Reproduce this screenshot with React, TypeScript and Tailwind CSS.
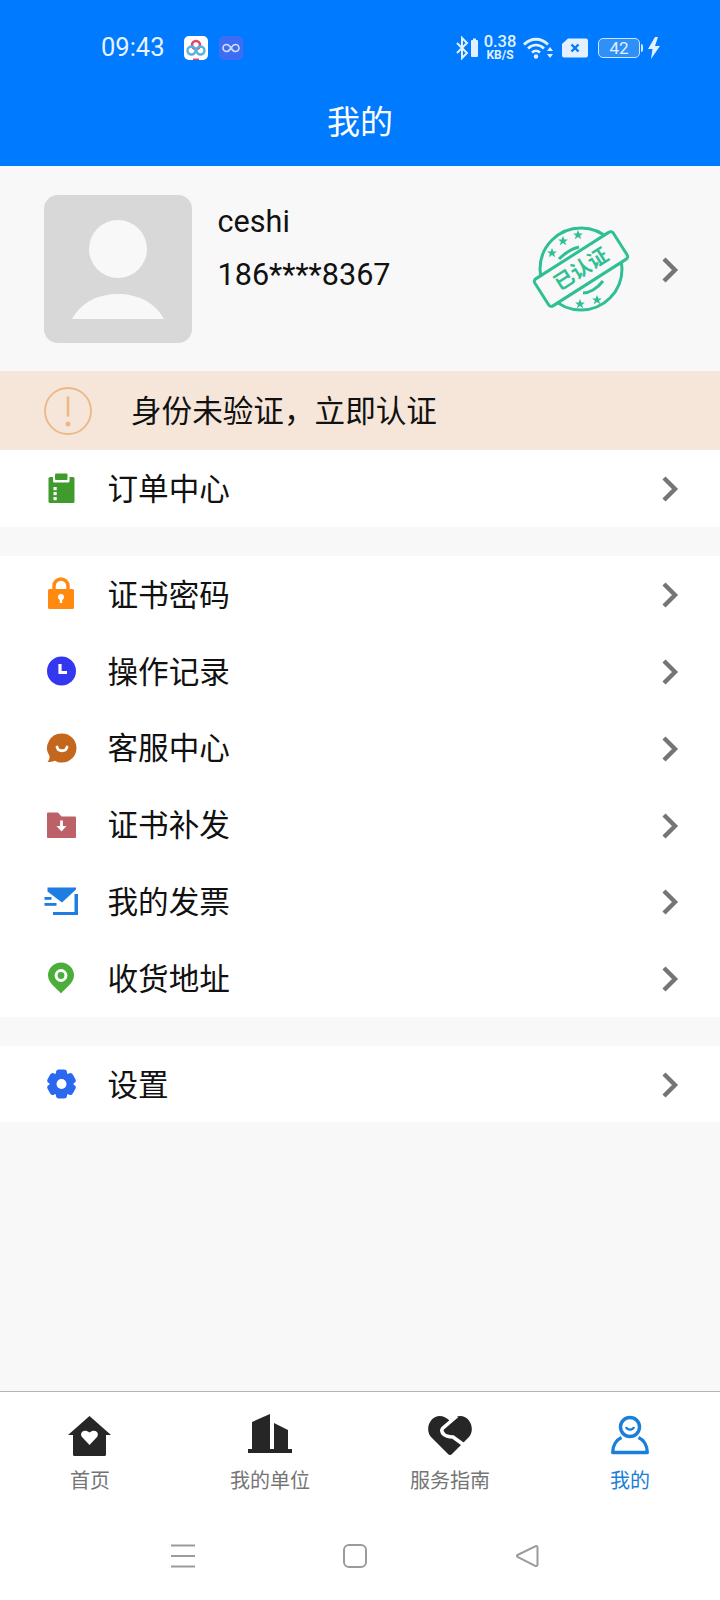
import React from "react";

const Chevron = () => (
  <svg width="18" height="28" viewBox="0 0 18 28" className="shrink-0 translate-y-[1px]">
    <path d="M3 3 L14 14 L3 25" fill="none" stroke="#757575" strokeWidth="4.4" />
  </svg>
);

const icons: Record<string, React.ReactNode> = {
  order: (
    <>
      <rect x="4.500" y="7" width="26" height="26" rx="1.500" fill="#3f9b2c" />
      <path d="M9 6h16.500v5a1.500 1.500 0 0 1-1.500 1.500H10.500A1.500 1.500 0 0 1 9 11z" fill="#fff" />
      <rect x="11" y="3.500" width="12.500" height="6.500" rx="1" fill="#3f9b2c" />
      <rect x="9.500" y="17" width="3.200" height="3.200" fill="#fff" />
      <rect x="9.500" y="22" width="3.200" height="3.200" fill="#fff" />
      <rect x="9.500" y="27" width="3.200" height="3.200" fill="#fff" />
    </>
  ),
  lock: (
    <>
      <path d="M10 15v-5a7 7 0 0 1 14 0v5" fill="none" stroke="#ff8a0f" strokeWidth="3.400" />
      <rect x="4" y="13" width="26" height="20" rx="1.500" fill="#ff8a0f" />
      <circle cx="17" cy="21" r="3" fill="#fff" />
      <rect x="15.800" y="22" width="2.400" height="5" fill="#fff" />
    </>
  ),
  clock: (
    <>
      <circle cx="17.500" cy="18" r="14.500" fill="#3437f0" />
      <path d="M16 11v8.500h7" fill="none" stroke="#fff" strokeWidth="3.200" />
    </>
  ),
  chat: (
    <>
      <path d="M18 3.500c8 0 14.500 6.300 14.500 14.500S26 32.500 18 32.500c-3 0-5-.5-7-1.800-2 .8-5 1.300-7.500 1.300 1.500-1.700 2.200-3.600 2-6A14.500 14.500 0 0 1 18 3.500z" fill="#c4661c" />
      <path d="M13 17c1 5 9 5 10 0" fill="none" stroke="#fff" strokeWidth="2.800" strokeLinecap="round" />
    </>
  ),
  folder: (
    <>
      <path d="M3 6.500a1 1 0 0 1 1-1h10l3.500 4H31a1 1 0 0 1 1 1V30a1 1 0 0 1-1 1H4a1 1 0 0 1-1-1z" fill="#bd6168" />
      <path d="M17.500 13.500v7" stroke="#fff" strokeWidth="2.800" />
      <path d="M12.500 19h10l-5 5.500z" fill="#fff" />
    </>
  ),
  mail: (
    <>
      <path d="M3.500 4.500h28.500v2L18 19.500 3.500 8.500z" fill="#1d7de0" />
      <path d="M30.500 11H34v21H9v-3h21.500z" fill="#1d7de0" />
      <rect x="0.500" y="14" width="7" height="2.800" fill="#1d7de0" />
      <rect x="0.500" y="20" width="12" height="2.800" fill="#1d7de0" />
    </>
  ),
  pin: (
    <>
      <path d="M17 33.500 C13 28.500 4 23 4 15.500 A13 13 0 0 1 30 15.500 C30 23 21 28.500 17 33.500z" fill="#4cae3a" />
      <circle cx="17" cy="15.500" r="6.400" fill="#fff" />
      <circle cx="17" cy="15.500" r="3.400" fill="#4cae3a" />
    </>
  ),
  gear: (
    <>
      <circle cx="17.500" cy="18" r="12" fill="#2b68f0" />
      <rect x="12" y="3.500" width="11" height="29" rx="3" fill="#2b68f0" />
      <rect x="12" y="3.500" width="11" height="29" rx="3" fill="#2b68f0" transform="rotate(60 17.500 18)" />
      <rect x="12" y="3.500" width="11" height="29" rx="3" fill="#2b68f0" transform="rotate(120 17.500 18)" />
      <circle cx="17.500" cy="18" r="5" fill="#fff" />
    </>
  ),
};

const Row = ({ icon, label }: { icon: string; label: string }) => (
  <div className="flex h-[76.8px] items-center bg-white pl-[44px] pr-[41px]">
    <svg width="34" height="36" viewBox="0 0 34 36" className="shrink-0 overflow-visible">
      {icons[icon]}
    </svg>
    <span className="ml-[29.500px] flex-1 pt-[4px] text-[30.600px] leading-none text-[#111]">{label}</span>
    <Chevron />
  </div>
);

const Tab = ({ label, active, children }: { label: string; active?: boolean; children: React.ReactNode }) => (
  <div className="flex flex-col items-center">
    <svg width="48" height="48" viewBox="0 0 48 48">
      {children}
    </svg>
    <span className={`mt-[7px] text-[20px] leading-[28px] ${active ? "text-[#1a7fd8]" : "text-[#757575]"}`}>{label}</span>
  </div>
);

const Star = ({ x, y }: { x: number; y: number }) => (
  <path
    transform={`translate(${x} ${y}) scale(1.400)`}
    d="M0-3.600 1-1.100 3.500-1.100 1.500.5 2.300 3 0 1.500-2.300 3-1.500.5-3.500-1.100-1-1.100z"
    fill="#2fbf95"
  />
);

export default function App() {
  return (
    <div className="flex min-h-[1600px] w-[720px] flex-col bg-[#f8f8f8] font-['Roboto','Noto_Sans_CJK_SC',sans-serif]">
      <header className="h-[166px] bg-[#007aff] text-white">
        <div className="flex h-[96px] items-center pl-[101px] pr-[59px]">
          <span className="w-[83px] text-[25.500px] leading-none text-[#e8f3ff]">09:43</span>
          <svg width="24" height="24" viewBox="0 0 24 24">
            <rect width="24" height="24" rx="5" fill="#fff" />
            <circle cx="12" cy="9" r="4" fill="none" stroke="#e8406f" strokeWidth="2.600" />
            <circle cx="7.500" cy="14.500" r="4" fill="none" stroke="#55b4dc" strokeWidth="2.400" />
            <circle cx="16.500" cy="14.500" r="4" fill="none" stroke="#55b4dc" strokeWidth="2.400" />
            <rect x="9" y="22.500" width="6" height="1.500" fill="#e8406f" />
          </svg>
          <svg width="24" height="24" viewBox="0 0 24 24" className="ml-[11px]">
            <rect width="24" height="24" rx="5" fill="#3f6cf5" />
            <path d="M12 12c-1.500-2.500-3-3.500-4.500-3.500a3.500 3.500 0 0 0 0 7c1.500 0 3-1 4.500-3.500s3-3.500 4.500-3.500a3.500 3.500 0 0 1 0 7c-1.500 0-3-1-4.500-3.500z" fill="none" stroke="#cfe0ff" strokeWidth="1.600" />
          </svg>
          <div className="ml-auto flex items-center text-[#e3f0ff]">
            <svg width="24" height="26" viewBox="0 0 24 26">
              <path d="M1 8l10 10-5 5V3l5 5L1 18" fill="none" stroke="#e3f0ff" strokeWidth="2" />
              <path d="M15 6a1 1 0 0 1 1-1h1V3.500h3V5h1a1 1 0 0 1 1 1v15a1 1 0 0 1-1 1h-5a1 1 0 0 1-1-1z" fill="#e3f0ff" />
            </svg>
            <div className="ml-[3px] flex w-[34px] flex-col items-center font-medium">
              <span className="text-[16.500px] leading-[14px]">0.38</span>
              <span className="text-[12px] font-bold leading-[12px]">KB/S</span>
            </div>
            <svg width="30" height="24" viewBox="0 0 30 24" className="ml-[6px]">
              <path d="M1 8.500c7-7 17-7 24 0M5 12.500c5-4.500 11-4.500 16 0M9 16.500c3-2.500 5-2.500 8 0" fill="none" stroke="#e3f0ff" strokeWidth="2.800" />
              <circle cx="13" cy="20.500" r="2.200" fill="#e3f0ff" />
              <path d="M27 11l3 4h-6zM27 22l3-4h-6z" fill="#e3f0ff" />
            </svg>
            <svg width="26" height="20" viewBox="0 0 26 20" className="ml-[9px]">
              <path d="M6 0.500h18a2 2 0 0 1 2 2v15a2 2 0 0 1-2 2H2a2 2 0 0 1-2-2V6z" fill="#e3f0ff" />
              <path d="M9.500 6.500l7 7M16.500 6.500l-7 7" stroke="#007aff" strokeWidth="2.400" />
            </svg>
            <div className="relative ml-[10px] flex h-[20px] w-[42px] items-center justify-center rounded-[5px] border border-[#cfe4ff] bg-[#2f90fa] text-[17px] leading-none">
              42
              <span className="absolute right-[-4px] top-[5px] h-[8px] w-[2px] rounded-r bg-[#cfe4ff]" />
            </div>
            <svg width="14" height="22" viewBox="0 0 14 22" className="ml-[7px]">
              <path d="M8 0 1 12h4.500L4 22l9-13H8l3-9z" fill="#e3f0ff" />
            </svg>
          </div>
        </div>
        <h1 className="pt-[2px] text-center text-[33px] font-normal leading-[50px]">我的</h1>
      </header>

      <section className="flex h-[205px] items-center pl-[44px] pr-[41px]">
        <div className="flex h-[148px] w-[148px] shrink-0 items-center justify-center rounded-[14px] bg-[#d8d8d8]">
          <svg width="148" height="148" viewBox="0 0 148 148">
            <ellipse cx="74" cy="54" rx="29" ry="29" fill="#f8f8f8" />
            <path d="M28 124c10-18 28-25 46-25s36 7 46 25z" fill="#f8f8f8" />
          </svg>
        </div>
        <div className="ml-[25.500px] flex h-[148px] flex-col text-[30.600px] leading-none text-[#111]">
          <span className="mt-[12px]">ceshi</span>
          <span className="mt-[23px]">186****8367</span>
        </div>
        <svg width="100" height="96" viewBox="0 0 100 96" className="ml-auto mr-[30px] shrink-0">
          <circle cx="50" cy="48" r="41" fill="none" stroke="#2fbf95" strokeWidth="3" />
          <path d="M28 38c6-6 12-10 20-12M52 72c6 0 14-4 20-12" fill="none" stroke="#2fbf95" strokeWidth="3" />
          <Star x={21} y={32} />
          <Star x={32} y={20} />
          <Star x={47} y={14} />
          <Star x={49} y={83} />
          <Star x={66} y={79} />
          <g transform="rotate(-32.500 50 48)">
            <rect x="3.500" y="32" width="93" height="32" rx="3" fill="#f8f8f8" stroke="#2fbf95" strokeWidth="3" />
            <text x="50" y="55" textAnchor="middle" fontSize="20" fontWeight="700" fill="#2fbf95">已认证</text>
          </g>
        </svg>
        <Chevron />
      </section>

      <div className="flex h-[79px] items-center bg-[#f6e6d9] pl-[44px]">
        <svg width="48" height="48" viewBox="0 0 48 48" className="shrink-0">
          <circle cx="24" cy="24" r="23" fill="none" stroke="#edb887" strokeWidth="1.800" />
          <path d="M24 9.500v20" stroke="#edb887" strokeWidth="2.600" />
          <circle cx="24" cy="37" r="2.500" fill="#edb887" />
        </svg>
        <span className="ml-[39px] pt-[4px] text-[30.600px] leading-none text-[#111]">身份未验证，立即认证</span>
      </div>

      <Row icon="order" label="订单中心" />
      <div className="h-[29px]" />
      <Row icon="lock" label="证书密码" />
      <Row icon="clock" label="操作记录" />
      <Row icon="chat" label="客服中心" />
      <Row icon="folder" label="证书补发" />
      <Row icon="mail" label="我的发票" />
      <Row icon="pin" label="收货地址" />
      <div className="h-[29px]" />
      <Row icon="gear" label="设置" />

      <div className="flex-1" />

      <nav className="grid h-[119px] grid-cols-4 border-t border-[#b4b4b4] bg-white pt-[20px]">
        <Tab label="首页">
          <path d="M23.500 4 45 23h-5v19.500a1.500 1.500 0 0 1-1.500 1.500h-30A1.500 1.500 0 0 1 7 42.500V23H2z" fill="#262626" />
          <path d="M23.500 33l-7.500-8c-3-4 2-9 7.500-4.500 5.500-4.500 10.500.5 7.500 4.500z" fill="#fff" />
        </Tab>
        <Tab label="我的单位">
          <path d="M6 37V10L24 2v35zM28 37V11l14 7v19z" fill="#262626" />
          <rect x="2" y="37" width="44" height="4" fill="#262626" />
        </Tab>
        <Tab label="服务指南">
          <path d="M24 43a3 3 0 0 1-2-1L5 25C-1 18 3 5 13 4c5 0 8 2 11 5 3-3 6-5 11-5 10 1 14 14 8 21L26 42a3 3 0 0 1-2 1z" fill="#262626" />
          <path d="M31 4 16.500 16.500Q14.500 19 18 22.500Q20 24.500 27 25L38 33" fill="none" stroke="#fff" strokeWidth="3.600" />
        </Tab>
        <Tab label="我的" active>
          <circle cx="24" cy="15" r="9.500" fill="none" stroke="#1a7fd8" strokeWidth="3.400" />
          <path d="M20 15c1 3.500 7 3.500 8 0" fill="none" stroke="#1a7fd8" strokeWidth="2.200" />
          <path d="M15.500 25.500C10 28 6.700 34 6.700 40.500h34.600C41.300 34 38 28 32.500 25.500" fill="none" stroke="#1a7fd8" strokeWidth="3.400" strokeLinejoin="round" />
        </Tab>
      </nav>

      <div className="flex h-[90px] items-start bg-white pt-[34px] pl-[171px]">
        <svg width="24" height="24" viewBox="0 0 24 24">
          <path d="M0 1.500h24M0 12h24M0 22.500h24" stroke="#9b9b9b" strokeWidth="2" />
        </svg>
        <svg width="24" height="24" viewBox="0 0 24 24" className="ml-[148px]">
          <rect x="1" y="1" width="22" height="22" rx="5" fill="none" stroke="#9b9b9b" strokeWidth="2" />
        </svg>
        <svg width="24" height="24" viewBox="0 0 24 24" className="ml-[148px]">
          <path d="M22.500 3.500a1.500 1.500 0 0 0-2.300-1.200L2.500 11a1 1 0 0 0 0 1.800l17.700 9a1.500 1.500 0 0 0 2.300-1.200z" fill="none" stroke="#9b9b9b" strokeWidth="2" />
        </svg>
      </div>
    </div>
  );
}
